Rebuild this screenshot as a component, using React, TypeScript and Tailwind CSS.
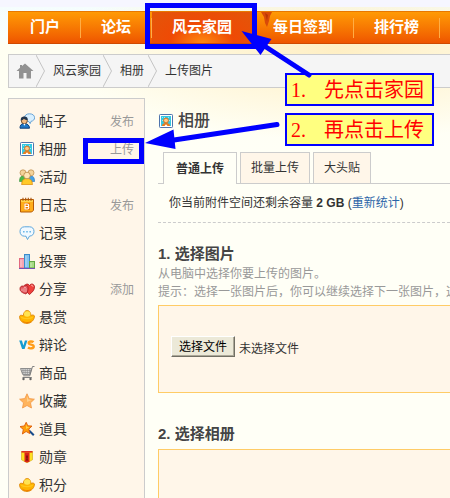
import { useRef } from "react";
import type { ReactNode } from "react";

// ── Icons ─────────────────────────────────────────────────────────────────────

const Icon = ({ children }: { children: ReactNode }) => (
  <svg className="size-4 shrink-0" viewBox="0 0 16 16" aria-hidden="true">
    {children}
  </svg>
);

const PostIcon = () => (
  <Icon>
    <path d="M10.5.8c-3 0-5 1.500-5 4 0 2.200 2 3.800 4.500 3.900l1.200 1.900.8-2.200c2.200-.5 3.600-1.800 3.600-3.600 0-2.500-2.100-4-5.100-4z" fill="#d8efff" stroke="#6aa5d6" />
    <path d="M1 15.200c0-3 1.200-4.700 4.200-4.700s5.300 1.700 5.300 4.700z" fill="#1f78c8" stroke="#123f78" />
    <circle cx="5.300" cy="7.800" r="3" fill="#f2b980" stroke="#5b3516" strokeWidth=".8" />
    <path d="M1.800 7.500C1.500 4.300 3.400 3.500 5.300 3.500s3.800 1 3.400 3.800C7 7 5.500 6.500 4.800 5.800 4.200 7 3 7.600 1.800 7.500z" fill="#23374f" />
    <path d="M4.300 10.800l1.100 2 1.200-2z" fill="#fff" />
  </Icon>
);

const AlbumIcon = () => (
  <Icon>
    <rect x="1.500" y="1.500" width="13" height="13" rx=".8" fill="#fff" stroke="#4f74ad" />
    <rect x="3" y="3" width="10" height="10" fill="#35c8e2" />
    <path d="M4 4h1v1H4zm2 0h1v1H6zm4 0h1v1h-1zM4 7h1v1H4zm7 0h1v1h-1z" fill="#9ceaf4" />
    <path d="M4 13c0-2 1.400-3 4-3s4 1 4 3z" fill="#e87b1c" />
    <circle cx="8" cy="7.500" r="2.400" fill="#ffc98a" stroke="#d9731c" />
    <path d="M6.500 13L8 11.200 9.500 13z" fill="#fff" />
  </Icon>
);

const EventIcon = () => (
  <Icon>
    <path d="M.5 12.500c0-3.500.9-5.500 3.500-5.500s4 2 4 5.500z" fill="#4cb848" stroke="#2e8d36" strokeWidth=".6" />
    <path d="M8 12.500c0-3.500 1.400-5.500 4-5.500s3.600 2 3.600 5.500z" fill="#46a2e4" stroke="#2374bd" strokeWidth=".6" />
    <circle cx="4" cy="3.800" r="3" fill="#f4d39a" stroke="#b98a48" strokeWidth=".7" />
    <circle cx="12" cy="3.800" r="3" fill="#f4d39a" stroke="#b98a48" strokeWidth=".7" />
    <path d="M2.700 15.700c0-4 1.600-6.200 5.300-6.200s5.400 2.200 5.400 6.200z" fill="#ffc928" stroke="#db8a13" strokeWidth=".8" />
    <circle cx="8" cy="6.500" r="3.300" fill="#ffe5b5" stroke="#b98a48" strokeWidth=".8" />
  </Icon>
);

const BlogIcon = () => (
  <Icon>
    <path d="M1.500 2.500h13v10.700L12.700 15H1.500z" fill="#ffad1a" stroke="#b65a05" />
    <path d="M2 3h12v2H2z" fill="#ffd34d" />
    <path d="M4 .8v3M6.700.8v3M9.300.8v3M12 .8v3" stroke="#a85008" strokeWidth="1.100" />
    <path d="M5 6h6v7H5z" fill="#f27c00" />
    <path d="M6 7v5h2.500c1.700 0 1.700-2.300.4-2.500C10 9.200 10 7 8.300 7zM6 9.500h3" fill="none" stroke="#fff" strokeWidth="1.200" />
  </Icon>
);

const RecordIcon = () => (
  <Icon>
    <path d="M5.500 1.800h5C13.300 1.800 15 3.700 15 6.400s-1.700 4.700-4.500 4.700L8.500 14.500 7 11.200H5.500C2.700 11.200 1 9.200 1 6.500s1.700-4.700 4.500-4.700z" fill="#f1f9ff" stroke="#5ba6dd" />
    <path d="M4 6h1.600v1.600H4zm3.200 0h1.600v1.600H7.200zm3.200 0H12v1.600h-1.600z" fill="#6cb8e8" />
  </Icon>
);

const PollIcon = () => (
  <Icon>
    <rect x=".5" y="5.500" width="5" height="9.500" fill="#f7a4b1" stroke="#e2697f" />
    <rect x="5.500" y="1.500" width="5" height="13.500" fill="#83c4f0" stroke="#3c8ccb" />
    <rect x="10.500" y="8.500" width="5" height="6.500" fill="#a7db84" stroke="#60a743" />
    <path d="M2 7v7M7 3v11M12 10v4" stroke="#fff" strokeOpacity=".4" />
    <path d="M0 15.500h16" stroke="#7653b3" />
  </Icon>
);

const ShareIcon = () => (
  <Icon>
    <path d="M10.500 13.500C7.500 11 5.500 9 5.500 6c0-2.800 3.700-4.200 5-1.300 1.300-2.900 5-1.800 5 1.300 0 3-2 5-5 7.500z" fill="#f0413d" stroke="#a8151c" strokeWidth=".8" />
    <path d="M7 13C3.500 12 .8 10.500 1 7.500c.1-2 1.800-3.100 3.300-2.200.8-1.800 4.400-1.500 4.700 1C9.400 9 8.500 11 7 13z" fill="#e0555b" stroke="#a8151c" strokeWidth=".8" />
    <path d="M3 10V7.500M5 11V7.300c0-1.300 2-1.300 2 0V11" fill="none" stroke="#ffd0d0" strokeWidth=".7" />
    <path d="M12 4.300c1-.3 2 .3 2 1.500" fill="none" stroke="#ffb3ac" />
  </Icon>
);

const IngotIcon = () => (
  <Icon>
    <path d="M.5 7.300c.7-1.500 2-1.300 3.700-.5C4.500 3.500 6 1.500 8.200 1.500s3.500 2 3.800 5c1.400-.8 2.800-.8 3.500.5.1 3.300-3 7.500-7.500 7.500S.5 11.500.5 7.300z" fill="#ffb400" stroke="#dc8100" strokeWidth=".8" />
    <ellipse cx="8.200" cy="5" rx="3.200" ry="2.800" fill="#ffe352" />
    <path d="M1.500 7.800c2 .3 3.700 1.300 6.500 1.300s4.500-1 6.500-1.500c-.8 1.800-2.900 2.700-6.300 2.700S2 9.500 1.500 7.800z" fill="#ffc81e" />
    <path d="M3.500 12c2 2 6.500 2.200 8.800.2" fill="none" stroke="#f07c00" />
  </Icon>
);

const DebateIcon = () => (
  <Icon>
    <path d="M.2 3.500h2.700l1.500 5 1.500-5h2.500L5.600 12H3.100z" fill="#159bd1" />
    <path d="M14.500 5.200c-1-1-4.700-1.200-4.800.7-.1 2.500 5 1 5 3.600 0 2.100-3.900 2.300-5.700 1" fill="none" stroke="#ff9c19" strokeWidth="2.400" />
  </Icon>
);

const GoodsIcon = () => (
  <Icon>
    <path d="M1.500 3.500h11l-1.600 6H3.700z" fill="#d4d4d4" stroke="#8e8e8e" />
    <path d="M4 4v5M6.200 4v5M8.400 4v5M10.600 4v5M2.500 5.500h9.700M3 7.500h8.600" stroke="#888" strokeWidth=".6" />
    <path d="M15.500 1.500h-2l-2.700 9.300H4.200M3.500 12.500h9.300" fill="none" stroke="#808080" />
    <circle cx="4.500" cy="14" r="1.200" fill="#666" />
    <circle cx="11.500" cy="14" r="1.200" fill="#666" />
  </Icon>
);

const StarIcon = () => (
  <Icon>
    <path d="M8 .8l2.200 4.800 5.200.6-3.900 3.600 1 5.200L8 12.500 3.500 15l1-5.200L.6 6.200l5.200-.6z" fill="#ffb45d" stroke="#f29543" strokeWidth=".8" />
    <path d="M8 3l1.300 3.400 3.300.5L8 9z" fill="#ffd08d" />
  </Icon>
);

const ToolIcon = () => (
  <Icon>
    <path d="M10 9.500l4.800 4.800" stroke="#174b8c" strokeWidth="2" />
    <path d="M7.200 1.300l1.600 3.500 4.200.3-3.200 3 1 4.500-3.700-2.100L3.400 13l.9-4.500L1 5.600l4.400-.7z" fill="#ff9d0a" stroke="#dc5a09" strokeWidth=".9" />
    <path d="M7.100 3l.8 2.700 2.600.2L7 8z" fill="#ffd34b" />
  </Icon>
);

const MedalIcon = () => (
  <Icon>
    <path d="M2.500 2.500h11v8.300L8 13.800l-5.500-3z" fill="#ffdf22" stroke="#d1a80c" strokeWidth=".6" />
    <path d="M2.500 2h11v1.600h-11z" fill="#dd3021" />
    <path d="M5.500 3.500h5v9.200l-2.500.7-2.500-.7z" fill="#db2319" />
    <path d="M8 5.500l1 2.200-.5 2.200 1 1.600h-3l1-1.600L7 7.700z" fill="#7b130d" />
  </Icon>
);

const HomeIcon = () => (
  <svg className="h-4 w-[18px]" viewBox="0 0 18 16" aria-hidden="true">
    <path d="M9 .5L17.500 8H15v7.500h-4.500V10h-3v5.500H3V8H.5L4 4.800V2h2v1.100z" fill="#929292" />
  </svg>
);

// ── Data ──────────────────────────────────────────────────────────────────────

interface SideEntry {
  label: string;
  icon: ReactNode;
  action?: string;
  marked?: boolean;
}

const SIDE_ENTRIES: SideEntry[] = [
  { label: "帖子", icon: <PostIcon />, action: "发布" },
  { label: "相册", icon: <AlbumIcon />, action: "上传", marked: true },
  { label: "活动", icon: <EventIcon /> },
  { label: "日志", icon: <BlogIcon />, action: "发布" },
  { label: "记录", icon: <RecordIcon /> },
  { label: "投票", icon: <PollIcon /> },
  { label: "分享", icon: <ShareIcon />, action: "添加" },
  { label: "悬赏", icon: <IngotIcon /> },
  { label: "辩论", icon: <DebateIcon /> },
  { label: "商品", icon: <GoodsIcon /> },
  { label: "收藏", icon: <StarIcon /> },
  { label: "道具", icon: <ToolIcon /> },
  { label: "勋章", icon: <MedalIcon /> },
  { label: "积分", icon: <IngotIcon /> },
];

const TABS = ["普通上传", "批量上传", "大头贴"];

// ── Navigation ────────────────────────────────────────────────────────────────

const NavItem = ({ label }: { label: string }) => (
  <a href="#" className="flex items-center">
    <span className="px-5">{label}</span>
    <span className="h-5 w-px bg-[#ffad45]" />
  </a>
);

const NavBar = () => (
  <nav className="flex h-[33px] whitespace-nowrap border-y border-t-[#e87800] border-b-[#cf4a00] bg-linear-to-b from-[#ff9a05] to-[#ee5400] pl-0.5 text-[15px] font-bold text-white">
    <NavItem label="门户" />
    <NavItem label="论坛" />
    <a
      href="#"
      className="relative flex items-center bg-[radial-gradient(ellipse_at_bottom,#ff8a10_0%,#ef4a05_45%,#e2560a_100%)] px-5"
    >
      风云家园
      <span className="absolute -top-[9px] -right-[5px] -bottom-1.5 -left-[7px] border-5 border-[#0000ff]" />
    </a>
    <div className="relative ml-px flex">
      <svg className="absolute top-0 left-2 h-4 w-3" viewBox="0 0 12 16" aria-hidden="true">
        <path d="M0 0h11L9 4 8 9l-2 6-2-4-1-6z" fill="#d94a08" />
        <path d="M4 1l3 2-1 6z" fill="#b93506" />
      </svg>
      <NavItem label="每日签到" />
    </div>
    <NavItem label="排行榜" />
  </nav>
);

const Chevron = () => (
  <svg className="h-full w-[9px]" viewBox="0 0 9 32" preserveAspectRatio="none" aria-hidden="true">
    <path d="M0 0l8.500 16L0 32" fill="none" stroke="#c4c4c4" />
  </svg>
);

const Breadcrumb = () => (
  <nav className="mt-2.5 flex h-[34px] items-center whitespace-nowrap border border-r-0 border-[#ccc] bg-[#f5f5f5] pl-[7px] text-xs text-[#333]">
    <a href="#" aria-label="首页" className="pr-0.5">
      <HomeIcon />
    </a>
    <Chevron />
    <a href="#" className="pr-0.5 pl-2">风云家园</a>
    <Chevron />
    <a href="#" className="pr-1 pl-2">相册</a>
    <Chevron />
    <span className="pl-2">上传图片</span>
  </nav>
);

// ── Sidebar ───────────────────────────────────────────────────────────────────

const Sidebar = () => (
  <aside className="w-[137px] shrink-0 border border-[#ccc] bg-[#fff6e9] py-2">
    <ul>
      {SIDE_ENTRIES.map(({ label, icon, action, marked }) => (
        <li key={label} className="relative flex h-7 items-center justify-between px-2.5">
          <a href="#" className="flex items-center gap-1 text-sm text-[#333]">
            {icon}
            {label}
          </a>
          {action && (
            <a href="#" className="pt-0.5 text-xs text-[#999]">{action}</a>
          )}
          {marked && (
            <span className="absolute top-[3px] right-0 h-[26px] w-[61px] border-5 border-[#0000ff]" />
          )}
        </li>
      ))}
    </ul>
  </aside>
);

// ── Upload form ───────────────────────────────────────────────────────────────

const FilePicker = () => {
  const inputRef = useRef<HTMLInputElement>(null);
  return (
    <div className="flex items-end gap-1">
      <input ref={inputRef} type="file" aria-label="选择文件" className="hidden" />
      <button
        type="button"
        onClick={() => inputRef.current?.click()}
        className="h-[21px] w-16 border border-t-white border-r-[#716f64] border-b-[#716f64] border-l-white bg-[#ece9d8] text-xs text-black shadow-[inset_-1px_-1px_0_#aca899]"
      >
        选择文件
      </button>
      <span className="text-xs text-[#333]">未选择文件</span>
    </div>
  );
};

const UploadPanel = () => (
  <main className="flex min-w-0 flex-1 flex-col overflow-hidden whitespace-nowrap text-xs text-[#333]">
    <h1 className="mt-2 flex h-7 items-center gap-1 pt-0.5 text-base font-medium text-[#444]">
      <AlbumIcon />
      相册
    </h1>

    <div className="mt-[18px] flex h-8 shrink-0">
      <div className="w-[5px] border-b border-[#ccc]" />
      {TABS.map((tab, i) => (
        <div key={tab} className="flex">
          <button
            type="button"
            className={
              i === 0
                ? "border border-b-0 border-[#ccc] px-3 font-bold"
                : "border border-[#ccc] bg-[#fff6e9] px-2.5"
            }
          >
            {tab}
          </button>
          <div className="w-[3px] border-b border-[#ccc]" />
        </div>
      ))}
      <div className="flex-1 border-b border-[#ccc]" />
    </div>

    <p className="border-b border-dashed border-[#ccc] py-2.5 pl-[11px] leading-[18px]">
      你当前附件空间还剩余容量 <strong>2 GB</strong> (
      <a href="#" className="text-[#2b65a8]">重新统计</a>)
    </p>

    <h2 className="mt-5 text-[15px] leading-[22px] font-bold text-[#444]">1. 选择图片</h2>
    <p className="leading-[18px] text-[#999]">
      从电脑中选择你要上传的图片。
      <br />
      提示：选择一张图片后，你可以继续选择下一张图片，这
    </p>
    <section className="mt-1 h-[88px] shrink-0 border border-r-0 border-[#ffcc66] bg-[#fff6e9] pt-[30px] pl-3">
      <FilePicker />
    </section>

    <h2 className="mt-[30px] text-[15px] leading-[22px] font-bold text-[#444]">2. 选择相册</h2>
    <section className="mt-1 min-h-12 flex-1 border border-r-0 border-b-0 border-[#ffcc66] bg-[#fff6e9]" />
  </main>
);

// ── Guide overlay ─────────────────────────────────────────────────────────────

interface CalloutProps {
  step: string;
  text: string;
}

const Callout = ({ step, text }: CalloutProps) => (
  <div className="flex h-[33px] items-center gap-[18px] border-2 border-[#0000ff] bg-[#ffff80] pr-2 pl-1 font-['Liberation_Serif','Noto_Sans_CJK_SC',serif] text-xl leading-none whitespace-nowrap text-[#ff0000]">
    <span>{step}</span>
    <span>{text}</span>
  </div>
);

const Guide = () => (
  <div className="pointer-events-none absolute inset-0">
    <div className="absolute top-[73px] left-[285px] flex flex-col gap-[7px]">
      <Callout step="1." text="先点击家园" />
      <Callout step="2." text="再点击上传" />
    </div>
    <svg className="absolute top-0 left-0" width="320" height="160" fill="#0000ff" aria-hidden="true">
      <path d="M266 47l43 28M174 140l103-15.500" stroke="#0000ff" strokeWidth="5" strokeLinecap="round" />
      <path d="M241.500 31l30 8-11 16zM145 143l28.500-13.500 2 19.500z" />
    </svg>
  </div>
);

export default function App() {
  return (
    <div className="relative flex min-h-screen flex-col overflow-hidden bg-[#fffff6] bg-[linear-gradient(#f6f6ff_7px,transparent_7px),radial-gradient(ellipse_280px_90px_at_75%_50px,#ffefc4,transparent),linear-gradient(#f5fdfd_7px,#f8ffff_36px,#fffff2_46px,#fffff6_150px)] pt-[11px] pl-2 font-['Liberation_Sans','Noto_Sans_CJK_SC',sans-serif]">
      <NavBar />
      <Breadcrumb />
      <div className="mt-2.5 flex flex-1 gap-[13px]">
        <Sidebar />
        <UploadPanel />
      </div>
      <Guide />
    </div>
  );
}
